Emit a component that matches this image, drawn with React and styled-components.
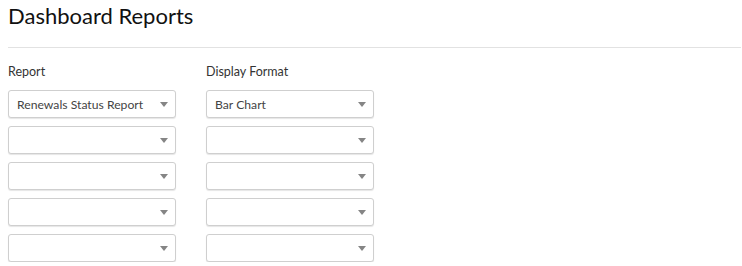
import styled, { createGlobalStyle } from 'styled-components'

const GlobalStyle = createGlobalStyle`
    body {
        margin: 0;
        background: #fff;
        font-family: Lato, 'Open Sans', sans-serif;
        color: #333;
    }
`

const Page = styled.div`
    padding: 0 1px 0 8px;
`

const Title = styled.h1`
    margin: 0;
    padding-top: 3px;
    font-size: 22px;
    font-weight: 400;
    line-height: 26px;
    color: #111;
`

const Divider = styled.hr`
    margin: 18px 0 0 0;
    border: none;
    border-top: 1px solid #e2e2e2;
`

const Columns = styled.div`
    display: flex;
    gap: 30px;
    padding-top: 16px;
`

const Column = styled.div`
    display: flex;
    flex-direction: column;
    width: 168px;
`

const Label = styled.div`
    font-size: 12.5px;
    line-height: 16px;
    color: #333;
    margin-bottom: 10px;
`

const Selects = styled.div`
    display: flex;
    flex-direction: column;
    gap: 8px;
`

const Select = styled.div`
    height: 28px;
    box-sizing: border-box;
    border: 1px solid #cfcfcf;
    border-radius: 3px;
    box-shadow: 0 1px 1px rgba(0, 0, 0, 0.1);
    display: flex;
    align-items: center;
    padding: 0 8px;
    font-size: 12.2px;
    color: #444;
    background: #fff;
`

const Value = styled.span`
    flex: 1;
    white-space: nowrap;
`

const Caret = styled.span`
    width: 0;
    height: 0;
    margin-right: -1px;
    border-left: 4px solid transparent;
    border-right: 4px solid transparent;
    border-top: 5px solid #858585;
`

const reports = ['Renewals Status Report', '', '', '', '']
const formats = ['Bar Chart', '', '', '', '']

function SelectColumn({ label, values }) {
    return (
        <Column>
            <Label>{label}</Label>
            <Selects>
                {values.map((v, i) => (
                    <Select key={i}>
                        <Value>{v}</Value>
                        <Caret />
                    </Select>
                ))}
            </Selects>
        </Column>
    )
}

function App() {
    return (
        <Page>
            <GlobalStyle />
            <Title>Dashboard Reports</Title>
            <Divider />
            <Columns>
                <SelectColumn label="Report" values={reports} />
                <SelectColumn label="Display Format" values={formats} />
            </Columns>
        </Page>
    )
}

export default App
